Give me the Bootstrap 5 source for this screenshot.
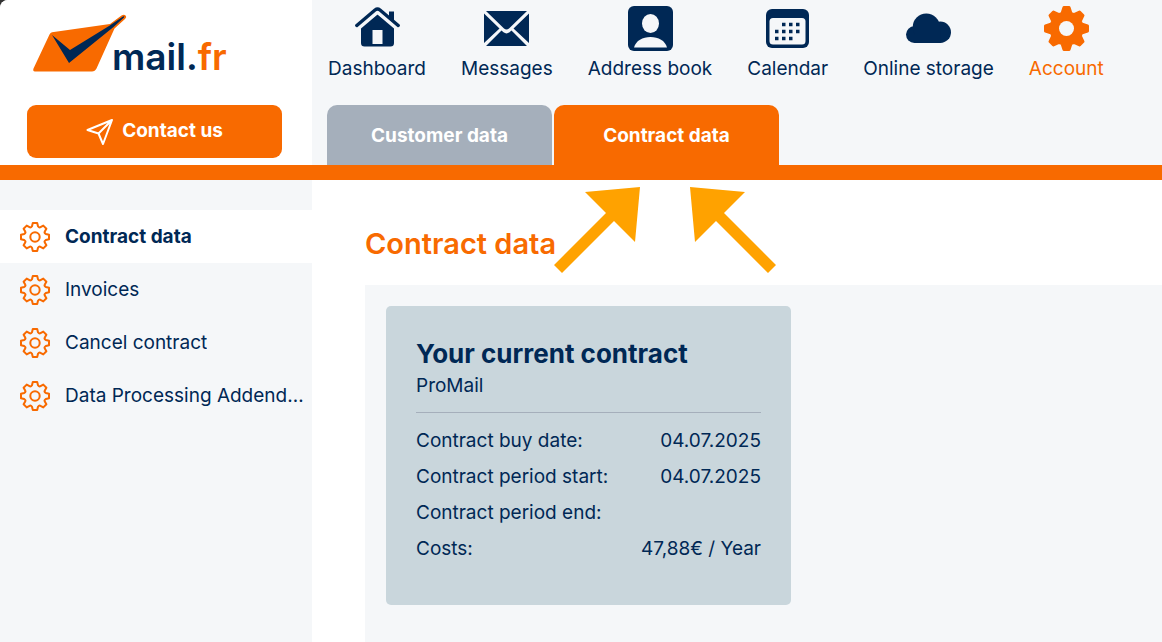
<!DOCTYPE html>
<html lang="en">
<head>
<meta charset="utf-8">
<meta name="viewport" content="width=device-width, initial-scale=1">
<title>mail.fr – Contract data</title>
<link rel="stylesheet" href="https://cdn.jsdelivr.net/npm/bootstrap@5.3.0/dist/css/bootstrap.min.css">
<style>
  :root { --navy: #002855; --orange: #f86a00; --pale: #f5f7f9; --slate: #a5afbb; --rail: 312px; }
  html { background: #333; }
  body { font-family: Inter, "Liberation Sans", sans-serif; font-size: 19px; line-height: 28px; color: var(--navy); background: transparent; }
  a { color: inherit; text-decoration: none; }
  .rail { flex: 0 0 var(--rail); min-width: 0; }
  .page-head { border-bottom: 15px solid var(--orange); border-top-left-radius: 8px; overflow: hidden; background: var(--pale); }
  .brand-pane { background: #fff; padding: 14px 30px 7px 27px; }
  .brand-name { font-size: 37px; line-height: 46px; font-weight: 600; margin-left: -15px; padding-top: 20px; }
  .brand-name span, .accent { color: var(--orange); }
  .contact-btn { height: 53px; margin-top: 25px; border-radius: 9px; background: var(--orange); color: #fff; font-size: 19px; font-weight: 700; }
  .contact-btn:hover { background: #dd5e00; color: #fff; }
  .main-nav { gap: 35px; padding: 6px 16px 0; }
  .main-nav svg { width: 45px; height: 45px; fill: currentColor; }
  .main-nav a { line-height: 26px; gap: 5px; white-space: nowrap; }
  .tab-strip { gap: 2px; padding-left: 15px; }
  .tab-strip a { width: 225px; height: 60px; padding-top: 2px; border-radius: 10px 10px 0 0; background: var(--slate); color: #fff; font-weight: 700; }
  .tab-strip a.active { background: var(--orange); }
  .side { background: var(--pale); padding-top: 30px; }
  .side a { height: 53px; padding: 0 6px 0 20px; gap: 15px; }
  .side svg { width: 30px; height: 30px; flex: none; fill: none; stroke: var(--orange); stroke-width: 2; stroke-linejoin: round; }
  .side a.active { background: #fff; font-weight: 700; }
  .content { background: #fff; padding: 46px 0 0 53px; min-width: 0; }
  .content h1 { font-size: 29px; line-height: 36px; font-weight: 600; margin-bottom: 23px; color: var(--orange); }
  .panel { background: var(--pale); padding: 21px; }
  .contract { width: 405px; max-width: 100%; padding: 30px 30px 38px; border-radius: 5px; background: #c9d6dc; }
  .contract h2 { font-size: 26px; line-height: 36px; font-weight: 700; margin: 0; }
  .contract hr { margin: 12px 0 10px; border-color: var(--slate); opacity: 1; }
  .contract table { line-height: 36px; }
  .contract th, .contract td { padding: 0; }
  .contract th { font-weight: 400; }
  .pointers { top: 7px; left: 242px; width: 222px; height: 87px; fill: #ffa200; }
</style>
</head>
<body class="min-vh-100 d-flex flex-column">
<svg class="d-none">
  <symbol id="gear" viewBox="-15 -15 30 30">
    <path d="M-2.2-14 2.2-14 3-10.8Q4.200-9 5.500-9.800L8.300-11.400 11.400-8.300 9.800-5.500Q9-4.200 10.800-3L14-2.200V2.200L10.800 3Q9 4.200 9.800 5.500L11.400 8.300 8.300 11.400 5.500 9.800Q4.200 9 3 10.800L2.200 14H-2.200L-3 10.800Q-4.200 9-5.500 9.800L-8.300 11.400-11.400 8.300-9.800 5.500Q-9 4.200-10.800 3L-14 2.200V-2.200L-10.800-3Q-9-4.200-9.800-5.500L-11.400-8.300-8.300-11.400-5.500-9.800Q-4.200-9-3-10.800Z"/>
    <circle r="4.700"/>
  </symbol>
</svg>

<header class="page-head d-flex">
  <div class="rail brand-pane d-flex flex-column">
    <a href="#" class="d-flex align-items-start">
      <svg width="100" height="60" viewBox="27 14 100 60" aria-hidden="true">
        <path d="M52 32.200 110 24 121.500 15.600Q124 14 125.500 15.500T125 19L114.500 28.500 96.500 68.500Q95 71.500 92 71.500H35Q32.500 71.500 33.500 68.500L49.500 34.500Q50.500 32.400 52 32.200Z" fill="#f86a00"/>
        <path d="M52 35 70 50 109 26 123 16.500Q125 15.800 124 17.500L113.500 27 69 63Z" fill="#002855"/>
      </svg>
      <span class="brand-name">mail.<span>fr</span></span>
    </a>
    <button type="button" class="btn contact-btn border-0 w-100 d-flex align-items-center justify-content-center gap-2">
      <svg width="28" height="28" viewBox="0 0 28 28" fill="none" stroke="#fff" stroke-width="2" stroke-linejoin="round" aria-hidden="true">
        <path d="M26 2 1.500 12 12.500 15.500 17 26ZM26 2 12.500 15.500"/>
      </svg>
      Contact us
    </button>
  </div>
  <div class="flex-grow-1 d-flex flex-column justify-content-between">
    <nav class="main-nav d-flex" aria-label="Main">
      <a href="#" class="d-flex flex-column align-items-center">
        <svg viewBox="0 0 45 45" aria-hidden="true"><path d="M22.500 8.500 39 22.500V37Q39 40.500 35.500 40.500H9.500Q6 40.500 6 37V22.500Z"/><path d="M17.500 24h10v14h-10z" fill="#f5f7f9"/><path d="M1.800 19.500 22.500 3.200 43.200 19.500" fill="none" stroke="#f5f7f9" stroke-width="7.500"/><path d="M34 5.500h5V17l-5-4Z"/><path d="M1.800 19.500 20 4Q22.500 2 25 4L43.200 19.500" fill="none" stroke="currentColor" stroke-width="3.400" stroke-linecap="round"/></svg>
        Dashboard</a>
      <a href="#" class="d-flex flex-column align-items-center">
        <svg viewBox="0 0 45 45" aria-hidden="true"><path d="M2 5h41L25 22.500Q22.500 24.500 20 22.500ZM0 7.500 15.500 22.500 0 37ZM45 7.500V37L29.500 22.500ZM2 40 17.500 24.500 19.500 26.300Q22.500 28.500 25.500 26.300L27.500 24.500 43 40Z"/></svg>
        Messages</a>
      <a href="#" class="d-flex flex-column align-items-center">
        <svg viewBox="0 0 45 45" aria-hidden="true"><rect width="45" height="45" rx="6"/><g fill="#f5f7f9"><ellipse cx="22.500" cy="17.500" rx="8.500" ry="9.500"/><path d="M6 41.500C8 34.500 14.500 31 22.500 31S37 34.500 39 41.500Z"/></g></svg>
        Address book</a>
      <a href="#" class="d-flex flex-column align-items-center">
        <svg viewBox="0 0 45 45" aria-hidden="true"><rect x="1" y="3" width="43" height="39" rx="6"/><rect x="4.500" y="12" width="36" height="26.500" rx="3.500" fill="#f5f7f9"/><path stroke="currentColor" stroke-width="3.400" d="M17 18.500h3.500M24 18.500h3.500M31 18.500h3.500M10 25.500h3.500M17 25.500h3.500M24 25.500h3.500M31 25.500h3.500M10 32.500h3.500M17 32.500h3.500M24 32.500h3.500"/></svg>
        Calendar</a>
      <a href="#" class="d-flex flex-column align-items-center">
        <svg viewBox="0 0 45 45" aria-hidden="true"><circle cx="8.400" cy="28.600" r="8.400"/><circle cx="34.300" cy="26.300" r="10.700"/><circle cx="20.300" cy="21" r="13.600"/><path d="M8.400 24h26v13h-26z"/></svg>
        Online storage</a>
      <a href="#" class="accent d-flex flex-column align-items-center" aria-current="page">
        <svg viewBox="-15 -15 30 30" aria-hidden="true"><path stroke="currentColor" stroke-width="2" stroke-linejoin="round" d="M-1.700-14H1.700L3-10 5-9.200 8.700-11 11-8.700 9.200-5 10-3 14-1.700V1.700L10 3 9.200 5 11 8.700 8.700 11 5 9.200 3 10 1.700 14H-1.700L-3 10-5 9.200-8.700 11-11 8.700-9.200 5-10 3-14 1.700V-1.700L-10-3-9.200-5-11-8.700-8.700-11-5-9.200-3-10Z"/><circle r="5" fill="#f5f7f9"/></svg>
        Account</a>
    </nav>
    <nav class="tab-strip d-flex" aria-label="Account">
      <a href="#" class="d-flex align-items-center justify-content-center">Customer data</a>
      <a href="#" class="active d-flex align-items-center justify-content-center" aria-current="page">Contract data</a>
    </nav>
  </div>
</header>

<div class="d-flex flex-grow-1">
  <nav class="rail side" aria-label="Contract">
    <a href="#" class="active d-flex align-items-center" aria-current="page"><svg aria-hidden="true"><use href="#gear"/></svg><span class="text-truncate">Contract data</span></a>
    <a href="#" class="d-flex align-items-center"><svg aria-hidden="true"><use href="#gear"/></svg><span class="text-truncate">Invoices</span></a>
    <a href="#" class="d-flex align-items-center"><svg aria-hidden="true"><use href="#gear"/></svg><span class="text-truncate">Cancel contract</span></a>
    <a href="#" class="d-flex align-items-center"><svg aria-hidden="true"><use href="#gear"/></svg><span class="text-truncate">Data Processing Addend…</span></a>
  </nav>
  <main class="content flex-grow-1 d-flex flex-column position-relative">
    <h1>Contract data</h1>
    <svg class="pointers position-absolute" viewBox="0 0 222 87" aria-hidden="true">
      <path d="M86 0 31 5 52 26 0 78 8 86 60 34 81 55ZM136 0 191 5 170 26 222 78 214 86 162 34 141 55Z"/>
    </svg>
    <section class="panel flex-grow-1">
      <div class="contract">
        <h2>Your current contract</h2>
        <div>ProMail</div>
        <hr>
        <table class="w-100">
          <tbody>
            <tr><th scope="row">Contract buy date:</th><td class="text-end">04.07.2025</td></tr>
            <tr><th scope="row">Contract period start:</th><td class="text-end">04.07.2025</td></tr>
            <tr><th scope="row">Contract period end:</th><td></td></tr>
            <tr><th scope="row">Costs:</th><td class="text-end">47,88€ / Year</td></tr>
          </tbody>
        </table>
      </div>
    </section>
  </main>
</div>
<script src="https://cdn.jsdelivr.net/npm/bootstrap@5.3.0/dist/js/bootstrap.bundle.min.js"></script>
</body>
</html>
